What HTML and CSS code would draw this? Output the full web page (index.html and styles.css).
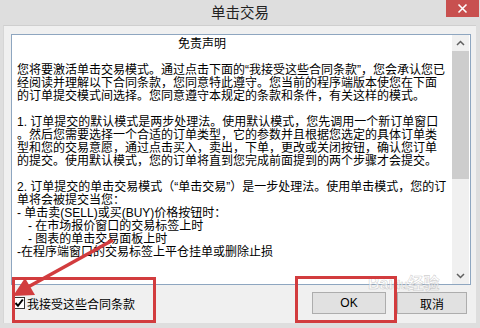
FILE: index.html
```html
<!DOCTYPE html>
<html lang="zh-CN">
<head>
    <meta charset="UTF-8">
    <title>单击交易</title>
    <link rel="stylesheet" href="styles.css">
</head>
<body>
    <div class="window">
        <div class="titlebar">
            <span class="title">单击交易</span>
            <span class="close">
                <svg width="11" height="11" viewBox="0 0 11 11"><path d="M1.5 1.5 L9.5 9.5 M9.5 1.5 L1.5 9.5" stroke="#fff" stroke-width="1.6"/></svg>
            </span>
        </div>
        <div class="client">
            <div class="terms">
                <div class="terms-text">
                    <div class="heading">免责声明</div>
                    <div class="line">&nbsp;</div>
                    <div class="line">您将要激活单击交易模式。通过点击下面的“我接受这些合同条款”，您会承认您已</div>
                    <div class="line">经阅读并理解以下合同条款，您同意特此遵守。您当前的程序端版本使您在下面</div>
                    <div class="line">的订单提交模式间选择。您同意遵守本规定的条款和条件，有关这样的模式。</div>
                    <div class="line">&nbsp;</div>
                    <div class="line">1. 订单提交的默认模式是两步处理法。使用默认模式，您先调用一个新订单窗口</div>
                    <div class="line">。然后您需要选择一个合适的订单类型，它的参数并且根据您选定的具体订单类</div>
                    <div class="line">型和您的交易意愿，通过点击买入，卖出，下单，更改或关闭按钮，确认您订单</div>
                    <div class="line">的提交。使用默认模式，您的订单将直到您完成前面提到的两个步骤才会提交。</div>
                    <div class="line">&nbsp;</div>
                    <div class="line">2. 订单提交的单击交易模式（“单击交易”）是一步处理法。使用单击模式，您的订</div>
                    <div class="line">单将会被提交当您：</div>
                    <div class="line">- 单击卖(SELL)或买(BUY)价格按钮时：</div>
                    <div class="line sub">- 在市场报价窗口的交易标签上时</div>
                    <div class="line sub">- 图表的单击交易面板上时</div>
                    <div class="line">-在程序端窗口的交易标签上平仓挂单或删除止损</div>
                </div>
                <div class="scrollbar">
                    <div class="arrow">
                        <svg width="9" height="6" viewBox="0 0 9 6"><path d="M1 5 L4.5 1.5 L8 5" fill="none" stroke="#606060" stroke-width="1.5"/></svg>
                    </div>
                    <div class="track"><div class="thumb"></div></div>
                    <div class="arrow">
                        <svg width="9" height="6" viewBox="0 0 9 6"><path d="M1 1 L4.5 4.5 L8 1" fill="none" stroke="#606060" stroke-width="1.5"/></svg>
                    </div>
                </div>
            </div>
            <div class="footer">
                <label class="agree">
                    <span class="checkbox">
                        <svg width="10" height="10" viewBox="0 0 10 10"><path d="M1.5 5 L4 7.8 L8.8 1.5" fill="none" stroke="#000" stroke-width="2"/></svg>
                    </span>
                    我接受这些合同条款
                </label>
                <div class="buttons">
                    <button class="btn btn-ok">OK</button>
                    <button class="btn btn-cancel">取消</button>
                </div>
            </div>
        </div>

        <div class="watermark">Bai<span class="paw">du</span>经验</div>

        <svg class="marks" width="480" height="328" viewBox="0 0 480 328">
            <rect x="13.5" y="278.5" width="141" height="43" fill="none" stroke="#d23c3e" stroke-width="3"/>
            <rect x="296.5" y="277.5" width="99" height="44" fill="none" stroke="#d23c3e" stroke-width="3"/>
            <line x1="113" y1="240" x2="28" y2="287" stroke="#d23c3e" stroke-width="3.5"/>
            <polygon points="13,296 25,278 35,295" fill="#d23c3e"/>
        </svg>
    </div>
</body>
</html>
```

FILE: styles.css
```css
* {
    margin: 0;
    padding: 0;
    box-sizing: border-box;
}
body {
    width: 480px;
    height: 328px;
    overflow: hidden;
    background: #dedede;
    font-family: "Liberation Sans", "Noto Sans CJK SC", sans-serif;
    color: #000;
}
.window {
    position: relative;
    width: 480px;
    height: 328px;
    display: flex;
    flex-direction: column;
    background: #dedede;
}

/* 标题栏 */
.titlebar {
    height: 25px;
    flex: none;
    display: grid;
    grid-template-columns: 1fr auto 1fr;
}
.title {
    grid-column: 2;
    align-self: center;
    font-size: 14.5px;
    line-height: 18px;
    color: #222;
    font-family: "Noto Sans CJK SC", sans-serif;
    padding-bottom: 2px;
}
.close {
    grid-column: 3;
    justify-self: end;
    align-self: start;
    width: 33px;
    height: 17px;
    margin-right: 1px;
    background: #c8504f;
    display: flex;
    align-items: center;
    justify-content: center;
}

/* 内容区 */
.client {
    flex: 1;
    margin: 0 4px 5px 3px;
    background: #f0f0f0;
    border-top: 1px solid #cfcfcf;
    border-left: 1px solid #d6d6d6;
    padding: 8px 9px 0 7px;
    display: flex;
    flex-direction: column;
}
.terms {
    width: 460px;
    height: 251px;
    border: 1px solid #8ea6c0;
    background: #fff;
    display: flex;
}
.terms-text {
    flex: 1;
    padding: 3px 0 0 5px;
    font-size: 12px;
    line-height: 13px;
    white-space: nowrap;
    overflow: hidden;
}
.heading {
    padding-left: 161px;
}
.sub {
    padding-left: 11px;
}

.scrollbar {
    width: 17px;
    margin-right: 1px;
    background: #f0f0f0;
    display: flex;
    flex-direction: column;
}
.arrow {
    height: 16px;
    display: flex;
    align-items: center;
    justify-content: center;
}
.track {
    flex: 1;
}
.thumb {
    height: 128px;
    background: #cdcdcd;
}

/* 底部 */
.footer {
    margin-top: 7px;
    height: 22px;
    display: flex;
    align-items: center;
    justify-content: space-between;
}
.agree {
    display: flex;
    align-items: center;
    gap: 2px;
    margin-left: 2px;
    font-size: 12px;
    font-family: "Noto Sans CJK SC", sans-serif;
}
.checkbox {
    width: 12px;
    height: 12px;
    border: 1px solid #333;
    background: #fff;
    display: flex;
    align-items: center;
    justify-content: center;
}
.buttons {
    display: flex;
    gap: 11px;
}
.btn {
    height: 22px;
    background: #e1e1e1;
    border: 1px solid #adadad;
    font-size: 12px;
    font-family: "Liberation Sans", "Noto Sans CJK SC", sans-serif;
    color: #000;
}
.btn-ok {
    width: 74px;
}
.btn-cancel {
    width: 70px;
}

/* 水印和标注 */
.watermark {
    position: absolute;
    left: 368px;
    top: 276px;
    font-size: 16px;
    line-height: 16px;
    font-weight: bold;
    color: rgba(255, 255, 255, 0.6);
    -webkit-text-stroke: 0.6px rgba(150, 150, 150, 0.45);
    font-family: "Liberation Sans", "Noto Sans CJK SC", sans-serif;
    white-space: nowrap;
}
.paw {
    font-size: 12px;
}
.marks {
    position: absolute;
    left: 0;
    top: 0;
    pointer-events: none;
}
```
